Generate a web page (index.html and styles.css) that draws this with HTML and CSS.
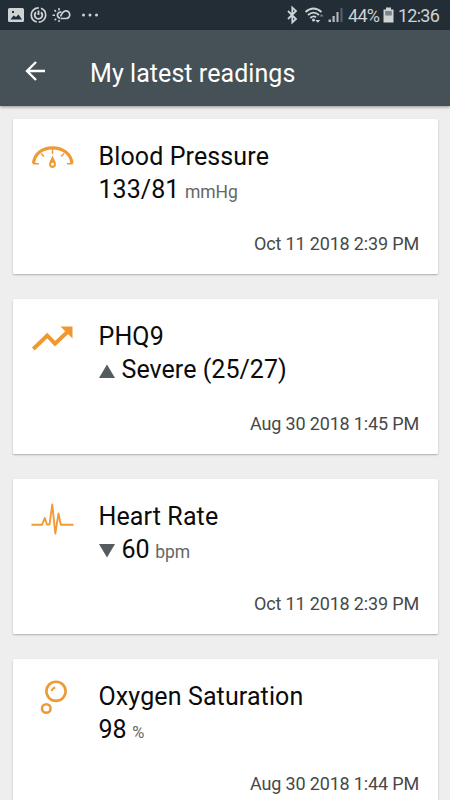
FILE: index.html
```html
<!DOCTYPE html>
<html lang="en">
<head>
<meta charset="utf-8">
<title>My latest readings</title>
<link rel="stylesheet" href="styles.css">
</head>
<body>
<div class="screen">
  <div class="status">
    <svg class="status-left" width="110" height="30" viewBox="0 0 110 30">
      <path fill="#ced3d6" fill-rule="evenodd" d="M9.500 8H22.500Q24 8 24 9.500V20.500Q24 22 22.500 22H9.500Q8 22 8 20.500V9.500Q8 8 9.500 8ZM10.500 19.500H22L18.500 14.500L16 17L13.500 15.500ZM12 11V13H14V11Z"/>
      <g fill="none" stroke="#ced3d6">
        <circle cx="38.500" cy="15" r="7.200" stroke-width="1.700" stroke-dasharray="20 2 21 2.200" stroke-dashoffset="9"/>
        <path d="M36 12.200A3.800 3.800 0 1 0 41 12.200M38.500 10.500V15" stroke-width="1.900"/>
        <path d="M60.500 18.500H66A3.800 3.800 0 1 0 63 12.300Q61.500 14 60.500 16.500" stroke-width="1.700"/>
        <path d="M61.500 12.200A3.100 3.100 0 1 0 60 18.200" stroke-width="1.700"/>
        <path d="M59 8V10.500M54.500 10L56 11.800M52.500 15.200H55M54.500 20.200L56.200 18.700M59 20V22" stroke-width="1.500"/>
      </g>
      <g fill="#ced3d6"><circle cx="83.500" cy="15" r="1.500"/><circle cx="90" cy="15" r="1.500"/><circle cx="96.500" cy="15" r="1.500"/></g>
    </svg>
    <div class="status-right">
      <svg width="60" height="30" viewBox="0 0 60 30">
        <path d="M2 11L10 19L6.300 22.500V7.500L10 11L2 19" fill="none" stroke="#ced3d6" stroke-width="1.800"/>
        <g fill="none" stroke="#ced3d6" stroke-width="1.800">
          <path d="M19.500 12Q27.500 5 35.500 12"/>
          <path d="M22 15Q27.500 10.200 33 15"/>
          <path d="M24.300 18Q27.500 15.200 30 17.300"/>
        </g>
        <circle cx="27.500" cy="20" r="1.500" fill="#ced3d6"/>
        <path d="M29.300 20H34.300L31.800 22.800Z" fill="#ced3d6"/><path d="M33.500 16.500H37.500L35.500 14Z" fill="#77818a"/>
        <path d="M42.500 19.500H45V22H42.500ZM46.500 16H48.700V22H46.500ZM50.500 12H52.500V22H50.500Z" fill="#b6bcc1"/>
        <path d="M54.500 8H56.500V22H54.500Z" fill="#56626a"/>
      </svg>
      <span class="percent">44%</span>
      <svg class="battery" width="11" height="30" viewBox="0 0 11 30">
        <path d="M3 7.500H8V9.500H10.500V22.500H.500V9.500H3Z" fill="#ced3d6"/><path d="M2.200 11H8.800V15.500H2.200Z" fill="#7b858b"/>
      </svg>
      <span class="clock">12:36</span>
    </div>
  </div>
  <header class="bar">
    <svg class="back" width="22" height="22" viewBox="0 0 22 22"><path d="M21 11H3M12 2L3 11L12 20" fill="none" stroke="#fff" stroke-width="2.400"/></svg>
    <h1 class="heading">My latest readings</h1>
  </header>
  <main class="list">
    <section class="card">
      <svg class="icon" width="44" height="44" viewBox="0 0 44 44">
        <path d="M2.500 21.500C3.500 11 12 5.800 21.500 5.800S40 11 41 21.500" fill="none" stroke="#ef9a35" stroke-width="3.200"/>
        <path d="M2 21.700H8M36 21.700H41.600M21.500 7V12M10.200 11.500L13 14.500M33 11.500L30 14.500" stroke="#ef9a35" stroke-width="1.500"/>
        <path fill="#ef9a35" fill-rule="evenodd" d="M21.500 13.500L24.700 20.500Q25.700 25.500 21.500 26Q17.300 25.500 18.300 20.500ZM21.500 20.700A1.500 1.500 0 1 0 21.510 20.700Z"/>
      </svg>
      <div class="info">
        <h2 class="name">Blood Pressure</h2>
        <p class="reading"><span class="value">133/81</span><span class="unit">mmHg</span></p>
      </div>
      <time class="date">Oct 11 2018 2:39 PM</time>
    </section>
    <section class="card">
      <svg class="icon" width="44" height="44" viewBox="0 0 44 44">
        <path d="M2.300 27L16.200 13.500L24 21.700L38 8.500" fill="none" stroke="#f0982d" stroke-width="3.900"/>
        <path d="M29.500 4.500H41.500V16.500Z" fill="#f0982d"/>
      </svg>
      <div class="info">
        <h2 class="name">PHQ9</h2>
        <p class="reading"><svg class="trend" width="16" height="14" viewBox="0 0 16 14"><path d="M0 14L8 .500L16 14Z" fill="#555c60"/></svg><span class="value">Severe (25/27)</span></p>
      </div>
      <time class="date">Aug 30 2018 1:45 PM</time>
    </section>
    <section class="card">
      <svg class="icon" width="44" height="44" viewBox="0 0 44 44">
        <path d="M.500 22.800H11L13.800 16L16 22.500H18.500L21.300 2.500L24.300 31.500L27.500 11.500L29.800 22.800H42.500" fill="none" stroke="#f19b37" stroke-width="1.900" stroke-linejoin="round"/>
      </svg>
      <div class="info">
        <h2 class="name">Heart Rate</h2>
        <p class="reading"><svg class="trend" width="16" height="14" viewBox="0 0 16 14"><path d="M0 0H16L8 13.500Z" fill="#555c60"/></svg><span class="value">60</span><span class="unit">bpm</span></p>
      </div>
      <time class="date">Oct 11 2018 2:39 PM</time>
    </section>
    <section class="card">
      <svg class="icon" width="44" height="44" viewBox="0 0 44 44">
        <g fill="none" stroke="#eb9a35"><circle cx="25" cy="9.300" r="9.600" stroke-width="2.600"/><circle cx="15.300" cy="26.500" r="4.300" stroke-width="2.500"/><path d="M20.500 9Q21.500 6 24.300 5.400" stroke-width="2"/></g>
      </svg>
      <div class="info">
        <h2 class="name">Oxygen Saturation</h2>
        <p class="reading"><span class="value">98</span><span class="unit percent-unit">%</span></p>
      </div>
      <time class="date">Aug 30 2018 1:44 PM</time>
    </section>
  </main>
</div>
</body>
</html>
```
FILE: styles.css
```css
* { box-sizing: border-box; }
body, h1, h2, p { margin: 0; font-weight: 400; }
body { font-family: Roboto, "Liberation Sans", sans-serif; background: #eee; }
svg { display: block; flex: none; }
.screen { height: 800px; overflow: hidden; background: #eeeeee; }
.status {
  height: 30px;
  display: flex;
  justify-content: space-between;
  background: #222d35;
  color: #ced3d6;
  font-size: 18px;
  line-height: 31px;
}
.status-right { display: flex; padding-right: 11px; }
.percent { margin-left: 2px; width: 31px; letter-spacing: -.7px; white-space: nowrap; }
.battery { margin: 0 4px 0 4px; }
.clock { width: 41px; letter-spacing: -.75px; white-space: nowrap; }
.bar {
  position: relative;
  height: 76px;
  display: flex;
  align-items: center;
  padding: 8px 24px 0;
  background: #465157;
  color: #fff;
  box-shadow: 0 1px 3px rgba(0, 0, 0, .4);
}
.back { margin-top: -2px; }
.heading { margin: 3px 0 0 44px; font-size: 25px; line-height: 32px; letter-spacing: .06px; white-space: nowrap; }
.list { display: grid; gap: 25px; padding: 13px 12.5px 0; }
.card {
  height: 155px;
  display: grid;
  grid-template-columns: 67px 1fr;
  grid-template-rows: 1fr auto;
  padding: 21px 18.500px 20px 19px;
  background: #fff;
  border-radius: 1.500px;
  box-shadow: 0 1px 2px rgba(0, 0, 0, .28);
}
.icon { margin: 1.500px 0 0 -1px; overflow: visible; }
.name { font-size: 25px; line-height: 33px; letter-spacing: .12px; color: #0b0b0b; white-space: nowrap; }
.reading { display: flex; align-items: baseline; line-height: 34px; color: #0b0b0b; white-space: nowrap; }
.value { font-size: 25px; letter-spacing: .05px; }
.unit { margin-left: 5.500px; font-size: 17.500px; color: #666; }
.percent-unit { font-size: 16.500px; }
.trend { margin-right: 7px; }
.date { grid-column: 1 / 3; justify-self: end; font-size: 18px; line-height: 20px; letter-spacing: -.16px; color: #484848; }
```
